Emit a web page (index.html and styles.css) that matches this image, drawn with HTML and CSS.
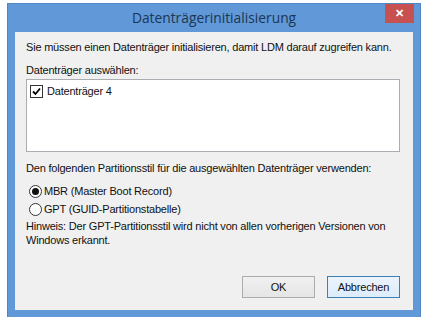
FILE: index.html
```html
<!DOCTYPE html>
<html lang="de">
<head>
    <meta charset="UTF-8">
    <title>Datenträgerinitialisierung</title>
    <link rel="stylesheet" href="styles.css">
</head>
<body>
    <div class="window">
        <div class="titlebar">
            <span class="title">Datenträgerinitialisierung</span>
            <span class="close">&#x2715;</span>
        </div>
        <div class="content">
            <div class="line">Sie müssen einen Datenträger initialisieren, damit LDM darauf zugreifen kann.</div>
            <div class="line label">Datenträger auswählen:</div>
            <div class="listbox">
                <div class="item">
                    <span class="check">
                        <svg width="9" height="9" viewBox="0 0 9 9"><path d="M1 4.5 L3.5 7 L8 1.5" fill="none" stroke="#000" stroke-width="1.8"/></svg>
                    </span>
                    Datenträger 4
                </div>
            </div>
            <div class="line style-label">Den folgenden Partitionsstil für die ausgewählten Datenträger verwenden:</div>
            <div class="radio-group">
                <div class="radio-row"><span class="radio checked"></span>MBR (Master Boot Record)</div>
                <div class="radio-row"><span class="radio"></span>GPT (GUID-Partitionstabelle)</div>
            </div>
            <div class="hint">Hinweis: Der GPT-Partitionsstil wird nicht von allen vorherigen Versionen von Windows erkannt.</div>
            <div class="buttons">
                <button class="btn">OK</button>
                <button class="btn default">Abbrechen</button>
            </div>
        </div>
    </div>
</body>
</html>
```

FILE: styles.css
```css
body {
    margin: 0;
    background: #fff;
    font-family: "Liberation Sans", Arial, sans-serif;
    font-size: 11px;
    letter-spacing: -0.2px;
    color: #111;
}
.window {
    margin: 3px 0 0 7px;
    width: 414px;
    height: 314px;
    box-sizing: border-box;
    background: #6098d8;
    border: 1px solid #4f86c6;
    border-bottom: none;
    padding: 0 7px 7px 7px;
    display: flex;
    flex-direction: column;
    position: relative;
}
.titlebar {
    height: 28px;
    display: flex;
    align-items: center;
    justify-content: center;
}
.title {
    font-family: "Open Sans", "Noto Sans", sans-serif;
    font-size: 13.8px;
    letter-spacing: 0;
    color: #1c3652;
    margin-top: -2px;
}
.close {
    position: absolute;
    top: 0;
    right: 6px;
    width: 29px;
    height: 19px;
    background: #c75050;
    color: #fff;
    font-size: 11px;
    font-weight: bold;
    display: flex;
    align-items: center;
    justify-content: center;
}
.content {
    flex: 1;
    background: #f0f0f0;
    padding: 8px 13px 12px 11px;
    display: flex;
    flex-direction: column;
}
.line {
    line-height: 14px;
    white-space: nowrap;
}
.label {
    margin-top: 9px;
}
.listbox {
    margin-top: 2px;
    height: 73px;
    box-sizing: border-box;
    background: #fff;
    border: 1px solid #abadb3;
    padding: 4px 3px;
}
.item {
    display: flex;
    align-items: center;
    gap: 4px;
    line-height: 14px;
}
.check {
    width: 11px;
    height: 11px;
    border: 1px solid #333;
    background: #fff;
    display: flex;
    align-items: center;
    justify-content: center;
}
.style-label {
    margin-top: 9px;
}
.radio-group {
    margin-top: 7px;
    display: flex;
    flex-direction: column;
}
.radio-row {
    height: 18px;
    display: flex;
    align-items: center;
    gap: 2px;
    padding-left: 3px;
}
.radio {
    width: 11px;
    height: 11px;
    border: 1px solid #333;
    border-radius: 50%;
    background: #fff;
    display: flex;
    align-items: center;
    justify-content: center;
}
.radio.checked::after {
    content: "";
    width: 7px;
    height: 7px;
    border-radius: 50%;
    background: #111;
}
.hint {
    margin-top: 1px;
    line-height: 14px;
    width: 372px;
}
.buttons {
    margin-top: auto;
    display: flex;
    justify-content: flex-end;
    gap: 12px;
}
.btn {
    width: 73px;
    height: 22px;
    font-family: "Liberation Sans", Arial, sans-serif;
    font-size: 11px;
    letter-spacing: -0.2px;
    color: #111;
    background: linear-gradient(#f0f0f0, #e5e5e5);
    border: 1px solid #acacac;
    padding: 0;
}
.default {
    border-color: #3c7fb1;
    background: linear-gradient(#ecf4fc, #dcecfc);
}
```
